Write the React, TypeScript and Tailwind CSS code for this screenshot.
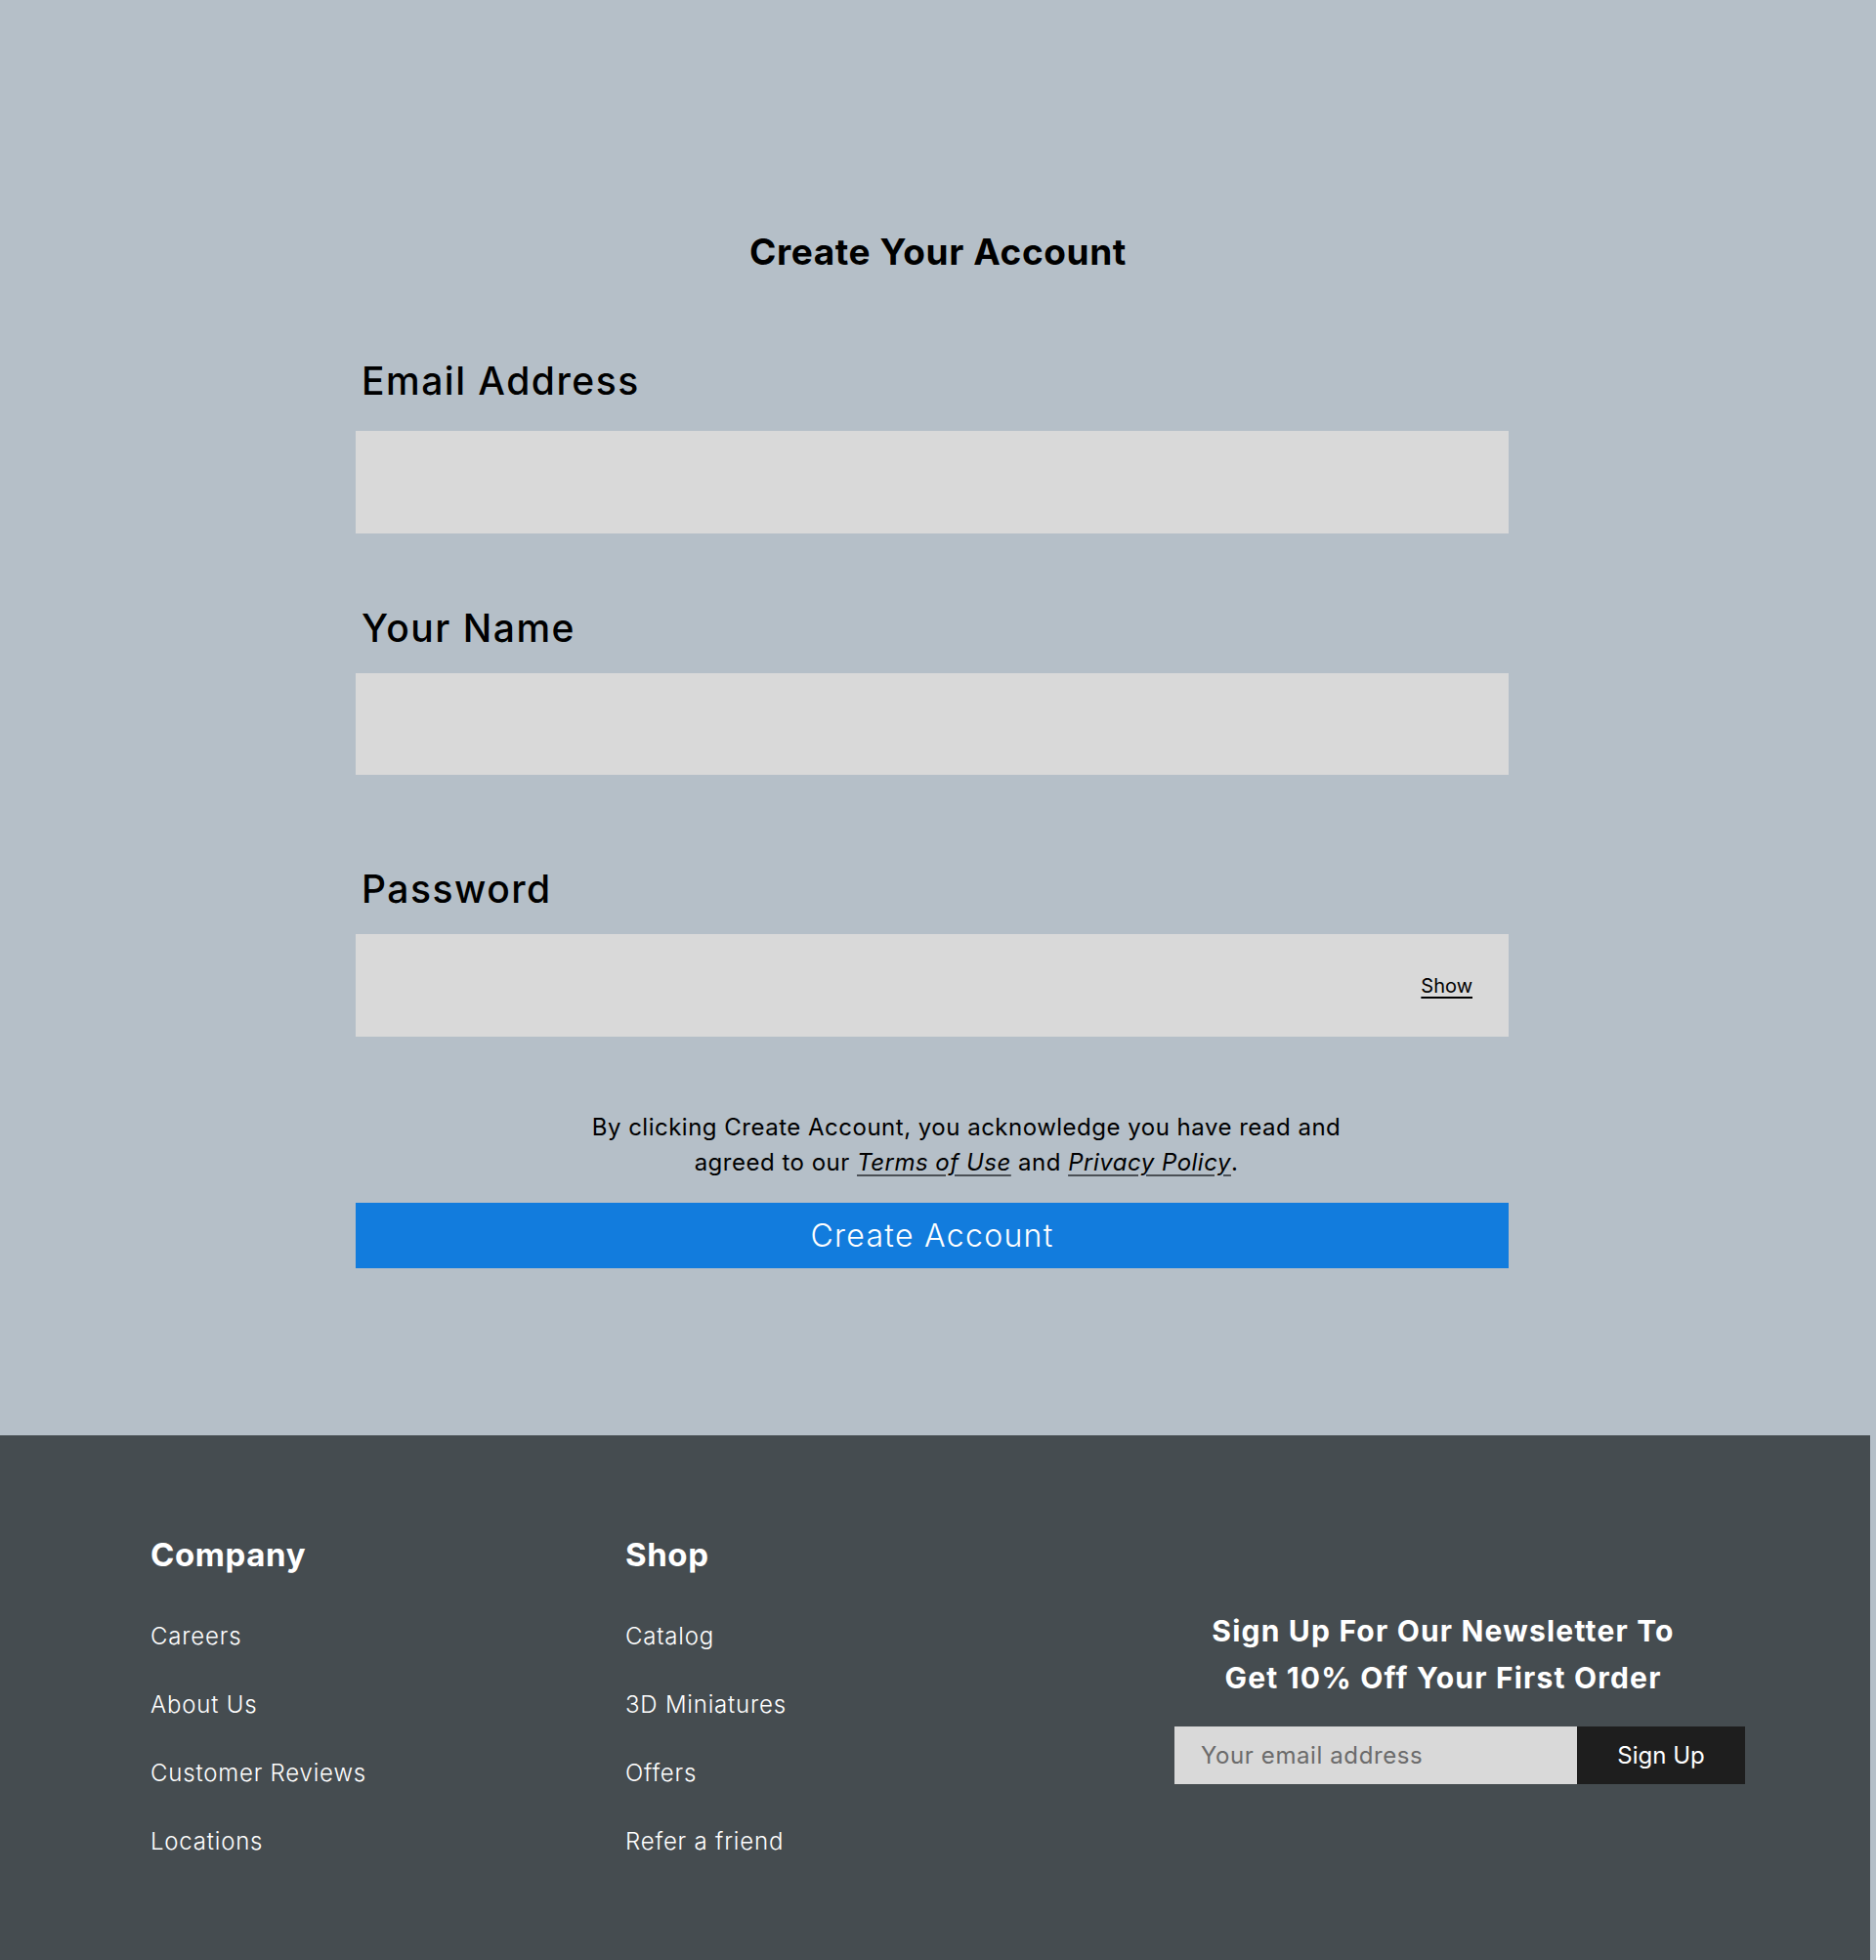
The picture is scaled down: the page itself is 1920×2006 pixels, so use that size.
import React, { useState } from 'react';

const font = { fontFamily: 'Inter, "Noto Sans", sans-serif' };

const companyLinks = ['Careers', 'About Us', 'Customer Reviews', 'Locations'];
const shopLinks = ['Catalog', '3D Miniatures', 'Offers', 'Refer a friend'];

const FooterColumn: React.FC<{ title: string; links: string[]; width: string }> = ({ title, links, width }) => (
  <div className={`flex flex-col ${width}`}>
    <h3 className="text-[33px] leading-[40px] font-bold tracking-[0.6px] text-white">{title}</h3>
    <ul className="mt-[48px] flex flex-col gap-[38px]">
      {links.map((l) => (
        <li key={l} className="text-[24px] leading-[32px] font-light tracking-[0.8px] text-white">
          <a href="#">{l}</a>
        </li>
      ))}
    </ul>
  </div>
);

export default function App() {
  const [showPw, setShowPw] = useState(false);

  return (
    <div style={font} className="w-[1920px] bg-[#b5bfc8] text-black">
      <main className="h-[1469px] pt-[234px]">
        <h1 className="text-center text-[37px] leading-[48px] font-bold tracking-[0.6px]">Create Your Account</h1>

        <form className="ml-[364px] w-[1180px] flex flex-col" onSubmit={(e) => e.preventDefault()}>
          <label className="mt-[84px] pl-[6px] text-[39px] leading-[48px] font-medium tracking-[1.5px]">Email Address</label>
          <input type="email" className="mt-[27px] h-[105px] w-full bg-[#d9d9d9] px-6 text-[24px] outline-none" />

          <label className="mt-[73px] pl-[6px] text-[39px] leading-[48px] font-medium tracking-[1.5px]">Your Name</label>
          <input type="text" className="mt-[22px] h-[104px] w-full bg-[#d9d9d9] px-6 text-[24px] outline-none" />

          <label className="mt-[93px] pl-[6px] text-[39px] leading-[48px] font-medium tracking-[1.5px]">Password</label>
          <div className="mt-[22px] h-[105px] w-full bg-[#d9d9d9] flex items-center">
            <input
              type={showPw ? 'text' : 'password'}
              className="h-full flex-1 bg-transparent px-6 text-[24px] outline-none"
            />
            <button
              type="button"
              onClick={() => setShowPw(!showPw)}
              className="mr-[37px] text-[20px] leading-[28px] underline underline-offset-4"
            >
              Show
            </button>
          </div>

          <p className="mt-[75px] pl-[70px] text-center text-[24px] leading-[36px] tracking-[0.5px]">
            <span className="whitespace-nowrap">By clicking Create Account, you acknowledge you have read and</span>
            <br />
            <span className="whitespace-nowrap">
              agreed to our{' '}
              <a href="#" className="italic underline decoration-[#4a4f55] underline-offset-4">Terms of Use</a>{' '}
              and{' '}
              <a href="#" className="italic underline decoration-[#4a4f55] underline-offset-4">Privacy Policy</a>.
            </span>
          </p>

          <button
            type="submit"
            className="mt-[23px] h-[67px] w-full bg-[#127cdd] text-white text-[32px] font-light tracking-[1.3px]"
          >
            Create Account
          </button>
        </form>
      </main>

      <footer className="w-[1914px] h-[537px] bg-[#454c50] flex pl-[154px] pt-[102px]">
        <FooterColumn title="Company" links={companyLinks} width="w-[486px]" />
        <FooterColumn title="Shop" links={shopLinks} width="w-[562px]" />

        <div className="w-[584px] flex flex-col pt-[74px]">
          <h3 className="pr-[34px] text-center text-[30px] leading-[48px] font-bold tracking-[1.2px] text-white">
            Sign Up For Our Newsletter To
            <br />
            Get 10% Off Your First Order
          </h3>
          <div className="mt-[26px] flex h-[59px]">
            <input
              type="email"
              placeholder="Your email address"
              className="w-[412px] h-full bg-[#d9d9d9] pl-[27px] text-[24px] tracking-[0.6px] text-black placeholder:text-[#6b6b6b] outline-none"
            />
            <button className="w-[172px] h-full bg-[#1e1e1e] text-white text-[24px]">Sign Up</button>
          </div>
        </div>
      </footer>
    </div>
  );
}
